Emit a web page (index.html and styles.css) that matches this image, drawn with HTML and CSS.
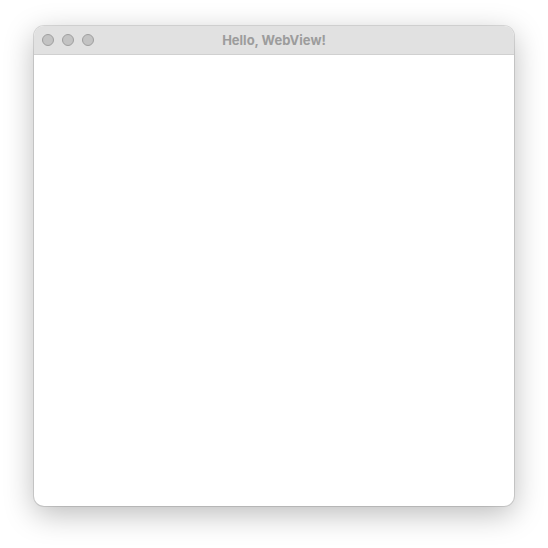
FILE: index.html
```html
<!DOCTYPE html>
<html lang="en">
  <head>
    <meta charset="UTF-8" />
    <meta name="viewport" content="width=device-width, initial-scale=1" />
    <title>Hello, WebView!</title>
    <link rel="stylesheet" href="styles.css">
  </head>
  <body>
    <div class="window">
      <header class="titlebar">
        <div class="controls">
          <button class="control" type="button" aria-label="Close"></button>
          <button class="control" type="button" aria-label="Minimize"></button>
          <button class="control" type="button" aria-label="Zoom"></button>
        </div>
        <h1 class="title">Hello, WebView!</h1>
      </header>
      <main class="webview"></main>
    </div>
  </body>
</html>
```

FILE: styles.css
```css
* {
  box-sizing: border-box;
}
body {
  display: flex;
  min-height: 100vh;
  margin: 0;
  padding: 26px 34px 42px;
  background-color: #fff;
  font-family: Inter, "Liberation Sans", sans-serif;
}
.window {
  display: flex;
  flex: 1;
  flex-direction: column;
  overflow: hidden;
  border-radius: 10px;
  background-color: #fff;
  box-shadow: 0 0 0 1px rgba(0, 0, 0, 0.12), 0 8px 30px rgba(0, 0, 0, 0.27);
}
.titlebar {
  display: grid;
  grid-template-columns: 1fr auto 1fr;
  align-items: center;
  height: 29px;
  padding: 0 8px;
  border-bottom: 1px solid #d0d0d0;
  background-color: #e1e1e1;
}
.controls {
  display: flex;
  gap: 8px;
}
.control {
  width: 12px;
  height: 12px;
  padding: 0;
  border: 1px solid #9f9f9f;
  border-radius: 50%;
  background-color: #c3c3c3;
}
.title {
  margin: 0;
  color: #9c9c9c;
  font-size: 13px;
  font-weight: 700;
  line-height: 16px;
}
.webview {
  flex: 1;
}
```
